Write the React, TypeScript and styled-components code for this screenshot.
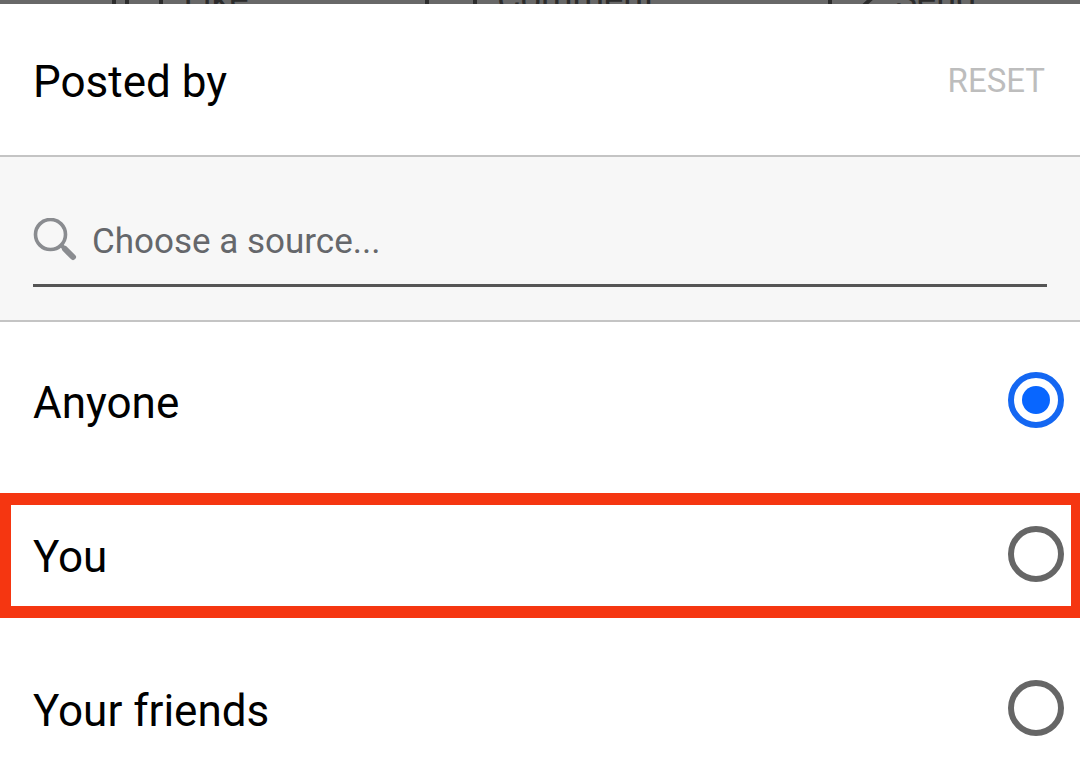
import React, { useState } from "react";
import styled, { createGlobalStyle } from "styled-components";

const GlobalStyle = createGlobalStyle`
  *, *::before, *::after { box-sizing: border-box; }
  body {
    margin: 0;
    background: #fff;
    color: #000;
    font-family: Roboto, "Liberation Sans", sans-serif;
  }
`;

const Screen = styled.div`
  height: 100vh;
  overflow: hidden;
  display: flex;
  flex-direction: column;
`;

const Backdrop = styled.div`
  flex: none;
  height: 4px;
  overflow: hidden;
  display: grid;
  grid-template-columns: repeat(3, 1fr);
  align-content: end;
  background: #686868;
`;

const PostAction = styled.button`
  display: flex;
  align-items: flex-end;
  justify-content: center;
  gap: 20px;
  height: 40px;
  margin-bottom: -13px;
  padding: 0;
  border: 0;
  background: none;
  color: #2c2c2c;
  font: 400 36px/36px Roboto, "Liberation Sans", sans-serif;
`;

const ActionIcon = styled.svg`
  width: 52px;
  height: 40px;
  fill: none;
  stroke: #2c2c2c;
  stroke-width: 4;
`;

const Header = styled.header`
  flex: none;
  display: flex;
  align-items: center;
  justify-content: space-between;
  height: 153px;
  padding: 4px 35px 0 33px;
  border-bottom: 2px solid #c4c4c4;
`;

const Title = styled.h1`
  margin: 0;
  font-size: 44px;
  line-height: 52px;
  font-weight: 400;
`;

const ResetButton = styled.button`
  padding: 0 0 2px;
  border: 0;
  background: none;
  color: #bdbdbd;
  font: 400 33px/40px Roboto, "Liberation Sans", sans-serif;
`;

const SearchArea = styled.section`
  flex: none;
  height: 165px;
  padding: 44px 33px 0;
  background: #f7f7f7;
  border-bottom: 2px solid #c4c4c4;
`;

const SearchField = styled.label`
  display: flex;
  align-items: center;
  gap: 15px;
  height: 86px;
  padding-bottom: 5px;
  border-bottom: 3px solid #555;
`;

const SearchIcon = styled.svg`
  flex: none;
  width: 44px;
  height: 44px;
  fill: none;
  stroke: #8a8c90;
`;

const SearchInput = styled.input`
  flex: 1;
  min-width: 0;
  padding: 4px 0 0;
  border: 0;
  outline: 0;
  background: none;
  color: #000;
  font: 400 35px/44px Roboto, "Liberation Sans", sans-serif;

  &::placeholder {
    color: #65676b;
    opacity: 1;
  }
`;

const Options = styled.div`
  flex: none;
  padding-top: 1px;
`;

const OptionRow = styled.label<{ $highlighted?: boolean }>`
  position: relative;
  display: flex;
  align-items: center;
  justify-content: space-between;
  height: 154px;
  padding: 0 16px 0 33px;

  &::after {
    content: "";
    display: ${(p) => (p.$highlighted ? "block" : "none")};
    position: absolute;
    inset: 16px 0 13px;
    border: solid #f53611;
    border-width: 12px 9px 12px 11px;
    pointer-events: none;
  }
`;

const OptionName = styled.span`
  padding-top: 6px;
  font-size: 44px;
  line-height: 52px;
`;

const Radio = styled.input`
  appearance: none;
  flex: none;
  display: grid;
  place-items: center;
  width: 56px;
  height: 56px;
  margin: 0;
  border: 6px solid #666;
  border-radius: 50%;

  &:checked {
    border-color: #1467f2;
  }

  &:checked::before {
    content: "";
    width: 28px;
    height: 28px;
    border-radius: 50%;
    background: #0866ff;
  }
`;

const sources = [
  { id: "anyone", name: "Anyone" },
  { id: "you", name: "You", highlighted: true },
  { id: "friends", name: "Your friends" },
];

export default function App() {
  const [selected, setSelected] = useState("anyone");
  const [query, setQuery] = useState("");

  return (
    <>
      <GlobalStyle />
      <Screen>
        <Backdrop>
          <PostAction>
            <ActionIcon viewBox="0 0 52 40" aria-hidden="true">
              <path d="M3 12v24M16 12v24M16 16l12-14 4 12h18v20" />
            </ActionIcon>
            Like
          </PostAction>
          <PostAction>
            <ActionIcon viewBox="0 0 52 40" aria-hidden="true">
              <path d="M2 36V4h48v32" />
            </ActionIcon>
            Comment
          </PostAction>
          <PostAction>
            <ActionIcon viewBox="0 0 52 40" aria-hidden="true">
              <path d="M6 36V4h42v17L36 32" />
            </ActionIcon>
            Send
          </PostAction>
        </Backdrop>
        <Header>
          <Title>Posted by</Title>
          <ResetButton type="button" onClick={() => setSelected("anyone")}>
            RESET
          </ResetButton>
        </Header>
        <SearchArea>
          <SearchField>
            <SearchIcon viewBox="0 0 44 44" aria-hidden="true">
              <circle cx="17.5" cy="16.500" r="15" strokeWidth="3.6" />
              <path d="M27.500 26.500l5 5" strokeWidth="4" />
              <path d="M32 31l8 8" strokeWidth="6" strokeLinecap="round" />
            </SearchIcon>
            <SearchInput
              type="text"
              aria-label="Choose a source"
              placeholder="Choose a source..."
              value={query}
              onChange={(e) => setQuery(e.target.value)}
            />
          </SearchField>
        </SearchArea>
        <Options role="radiogroup" aria-label="Posted by">
          {sources.map((s) => (
            <OptionRow key={s.id} $highlighted={s.highlighted}>
              <OptionName>{s.name}</OptionName>
              <Radio
                type="radio"
                name="source"
                value={s.id}
                checked={selected === s.id}
                onChange={() => setSelected(s.id)}
              />
            </OptionRow>
          ))}
        </Options>
      </Screen>
    </>
  );
}
